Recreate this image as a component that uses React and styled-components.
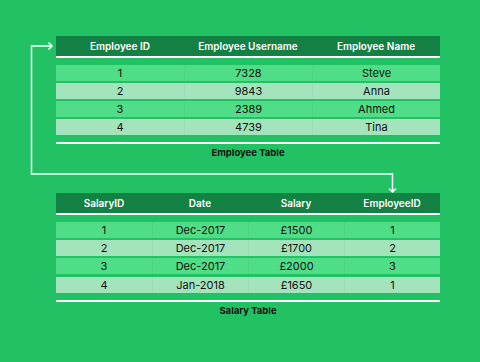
import React from "react";
import styled, { createGlobalStyle } from "styled-components";

const GlobalStyle = createGlobalStyle`
  body {
    margin: 0;
    background: #22c164;
    font-family: Inter, "Liberation Sans", sans-serif;
  }
`;

const Page = styled.div`
  position: relative;
  width: 480px;
  height: 362px;
  padding: 36px 0 0 16px;
  box-sizing: border-box;
  display: flex;
  flex-direction: column;
  align-items: center;
  gap: 35px;
  overflow: hidden;
`;

//TABLE
const TableBlock = styled.section`
  width: 384px;
  display: flex;
  flex-direction: column;
`;

const Head = styled.div`
  display: grid;
  grid-template-columns: repeat(${(p) => p.$cols}, 1fr);
  height: 20px;
  align-items: center;
  background: #138044;
  color: #fff;
  font-size: 10px;
  font-weight: 600;
  text-align: center;
  border-bottom: 2px solid #fff;
  margin-bottom: 6.7px;
`;

const Rows = styled.div`
  display: flex;
  flex-direction: column;
  gap: 2.2px;
`;

const Row = styled.div`
  display: grid;
  grid-template-columns: repeat(${(p) => p.$cols}, 1fr);
  height: 16px;
  align-items: stretch;
  background: ${(p) => (p.$even ? "#a3e4bc" : "#50dd88")};
`;

const Cell = styled.div`
  display: flex;
  align-items: center;
  justify-content: center;
  font-size: 11px;
  color: #111;
  & + & {
    border-left: 1px solid rgba(0, 0, 0, 0.035);
  }
`;

const Rule = styled.div`
  height: 2px;
  background: #fff;
  margin-top: 7px;
`;

const Caption = styled.div`
  margin-top: 4px;
  text-align: center;
  font-size: 9.5px;
  font-weight: 700;
  color: #111;
  line-height: 10px;
`;

const Connectors = styled.svg`
  position: absolute;
  left: 0;
  top: 0;
  pointer-events: none;
`;

const employees = [
  ["1", "7328", "Steve"],
  ["2", "9843", "Anna"],
  ["3", "2389", "Ahmed"],
  ["4", "4739", "Tina"],
];

const salaries = [
  ["1", "Dec-2017", "£1500", "1"],
  ["2", "Dec-2017", "£1700", "2"],
  ["3", "Dec-2017", "£2000", "3"],
  ["4", "Jan-2018", "£1650", "1"],
];

function Table({ columns, data, caption }) {
  const n = columns.length;
  return (
    <TableBlock>
      <Head $cols={n}>
        {columns.map((c) => (
          <span key={c}>{c}</span>
        ))}
      </Head>
      <Rows>
        {data.map((r, i) => (
          <Row key={i} $cols={n} $even={i % 2 === 1}>
            {r.map((v, j) => (
              <Cell key={j}>{v}</Cell>
            ))}
          </Row>
        ))}
      </Rows>
      <Rule />
      <Caption>{caption}</Caption>
    </TableBlock>
  );
}

export default function App() {
  return (
    <>
      <GlobalStyle />
      <Page>
        <Table
          columns={["Employee ID", "Employee Username", "Employee Name"]}
          data={employees}
          caption="Employee Table"
        />
        <Table
          columns={["SalaryID", "Date", "Salary", "EmployeeID"]}
          data={salaries}
          caption="Salary Table"
        />
        <Connectors width="480" height="362" viewBox="0 0 480 362">
          <g fill="none" stroke="#fff" strokeWidth="1.5">
            <path d="M52 46 H31.5 V174 H392.5 V192" />
            <path d="M48.5 42.5 L52 46 L48.5 49.5" />
            <path d="M389 188.5 L392.5 192 L396 188.5" />
          </g>
        </Connectors>
      </Page>
    </>
  );
}
